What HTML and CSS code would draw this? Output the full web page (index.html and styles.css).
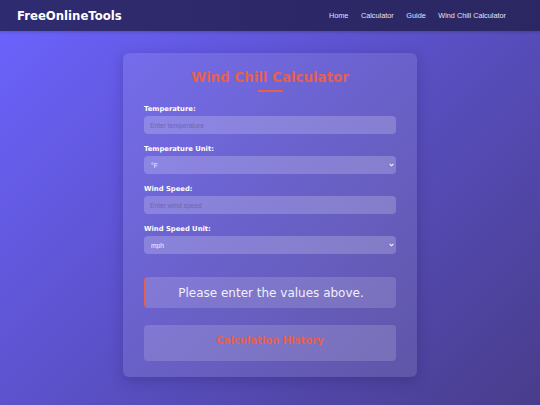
FILE: index.html
```html
<!DOCTYPE html>
<html lang="en">

<head>
    <meta charset="UTF-8">
    <meta name="viewport" content="width=device-width, initial-scale=1.0">
    <title>Wind Chill Calculator - FreeOnlineTools</title>
    <link rel="stylesheet" href="styles.css">
</head>

<body>

    <header class="site-header">
        <div class="logo">FreeOnlineTools</div>
        <nav class="nav">
            <a href="#">Home</a>
            <a href="#">Calculator</a>
            <a href="#">Guide</a>
            <a href="#">Wind Chill Calculator</a>
        </nav>
    </header>

    <main class="main">
        <div class="card">
            <h1 class="title">Wind Chill Calculator</h1>

            <div class="field">
                <label for="temperature">Temperature:</label>
                <input type="number" id="temperature" placeholder="Enter temperature">
            </div>

            <div class="field">
                <label for="tempUnit">Temperature Unit:</label>
                <div class="select-wrap">
                    <select id="tempUnit">
                        <option value="F">°F</option>
                        <option value="C">°C</option>
                    </select>
                    <svg class="chevron" width="5" height="4" viewBox="0 0 5 4">
                        <path d="M0.7 1 L2.5 2.8 L4.3 1" fill="none" stroke="#f2f0ff" stroke-width="1.1"/>
                    </svg>
                </div>
            </div>

            <div class="field">
                <label for="windSpeed">Wind Speed:</label>
                <input type="number" id="windSpeed" placeholder="Enter wind speed">
            </div>

            <div class="field">
                <label for="windUnit">Wind Speed Unit:</label>
                <div class="select-wrap">
                    <select id="windUnit">
                        <option value="mph">mph</option>
                        <option value="kmh">km/h</option>
                    </select>
                    <svg class="chevron" width="5" height="4" viewBox="0 0 5 4">
                        <path d="M0.7 1 L2.5 2.8 L4.3 1" fill="none" stroke="#f2f0ff" stroke-width="1.1"/>
                    </svg>
                </div>
            </div>

            <div class="result" id="result">Please enter the values above.</div>

            <div class="history">
                <h3>Calculation History</h3>
            </div>
        </div>
    </main>

</body>

</html>
```

FILE: styles.css
```css
* {
    box-sizing: border-box;
}

body {
    margin: 0;
    min-height: 405px;
    font-family: "DejaVu Sans", Verdana, sans-serif;
    color: #f4f3fb;
    background: linear-gradient(135deg, #6c63ff 0%, #483d8b 100%);
}

.site-header {
    height: 31px;
    display: flex;
    justify-content: space-between;
    align-items: center;
    padding: 0 34px 0 17px;
    background: linear-gradient(90deg, #2f2b70, #2b2762);
    box-shadow: 0 1px 3px rgba(0, 0, 0, 0.2);
}

.logo {
    font-size: 11.7px;
    font-weight: bold;
    color: #ffffff;
}

.nav {
    display: flex;
    gap: 12.5px;
}

.nav a,
.nav a:visited {
    font-family: "Liberation Sans", Arial, sans-serif;
    font-size: 7.3px;
    color: #e2e0f4;
    text-decoration: none;
}

.main {
    display: flex;
    justify-content: center;
    padding-top: 22px;
}

.card {
    width: 294px;
    padding: 17px 21px 16.5px;
    border-radius: 6px;
    background: rgba(255, 255, 255, 0.1);
    box-shadow: 0 4px 14px rgba(30, 20, 80, 0.25);
}

.title {
    margin: 0 0 13px;
    font-size: 13.4px;
    line-height: 16px;
    text-align: center;
    color: #e6604e;
}

.title::after {
    content: "";
    display: block;
    width: 25px;
    height: 2px;
    margin: 4px auto 0;
    background: #e6604e;
}

.field {
    margin-bottom: 11px;
}

.field label {
    display: block;
    margin-bottom: 3px;
    font-size: 6.8px;
    line-height: 8px;
    font-weight: bold;
    color: #ffffff;
}

.field input,
.field select {
    display: block;
    width: 100%;
    height: 18px;
    padding: 0 6px;
    border: none;
    border-radius: 4px;
    font-family: "Liberation Sans", Arial, sans-serif;
    font-size: 6.7px;
    color: #f2f0ff;
    background: rgba(255, 255, 255, 0.2);
}

.field select {
    appearance: none;
    padding-left: 7px;
}

.field input::placeholder {
    color: #6c66b6;
}

.select-wrap {
    position: relative;
}

.chevron {
    position: absolute;
    right: 2px;
    top: 7px;
}

.result {
    margin-top: 23px;
    height: 31px;
    display: flex;
    align-items: center;
    justify-content: center;
    border-left: 2.5px solid #e6604e;
    border-radius: 4px;
    font-size: 12px;
    color: #f1effb;
    background: rgba(255, 255, 255, 0.15);
}

.history {
    margin-top: 17px;
    height: 35.5px;
    padding: 10px 0 0;
    border-radius: 4px;
    background: rgba(255, 255, 255, 0.15);
}

.history h3 {
    margin: 0;
    font-size: 10px;
    line-height: 12px;
    text-align: center;
    color: #e6604e;
}
```
